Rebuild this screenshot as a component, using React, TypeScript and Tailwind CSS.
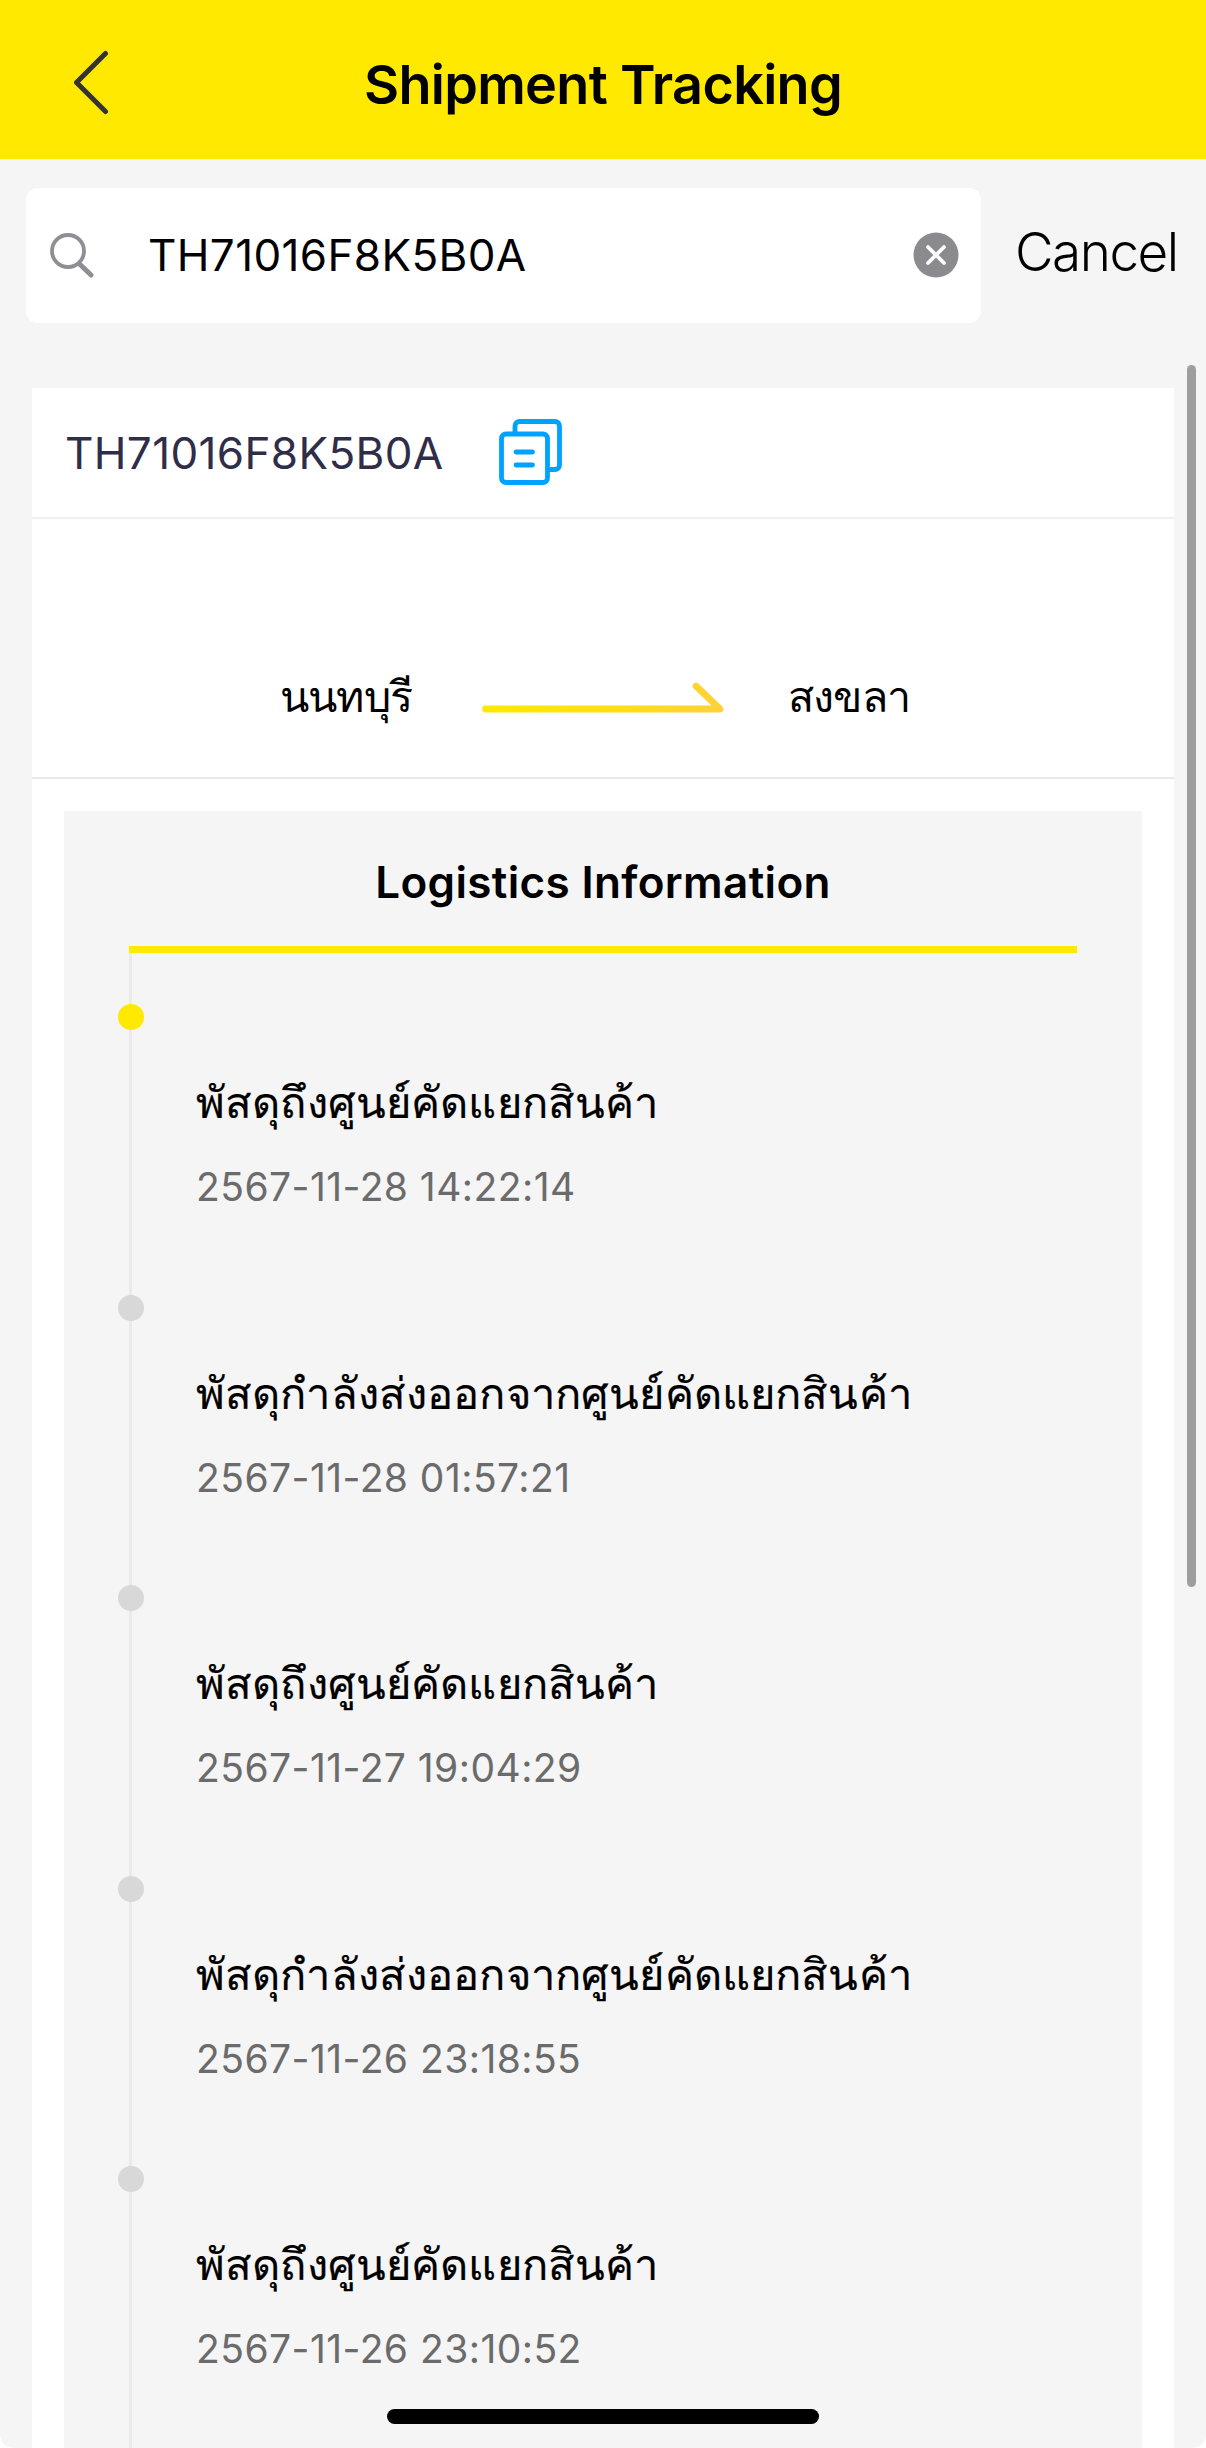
const events = [
  { text: 'พัสดุถึงศูนย์คัดแยกสินค้า', time: '2567-11-28 14:22:14' },
  { text: 'พัสดุกำลังส่งออกจากศูนย์คัดแยกสินค้า', time: '2567-11-28 01:57:21' },
  { text: 'พัสดุถึงศูนย์คัดแยกสินค้า', time: '2567-11-27 19:04:29' },
  { text: 'พัสดุกำลังส่งออกจากศูนย์คัดแยกสินค้า', time: '2567-11-26 23:18:55' },
  { text: 'พัสดุถึงศูนย์คัดแยกสินค้า', time: '2567-11-26 23:10:52' },
];

function Header() {
  return (
    <header className="relative flex h-[159px] shrink-0 items-center justify-center bg-[#ffe900] pt-[10px]">
      <svg className="absolute top-[50px] left-[73px]" width="36" height="65" viewBox="0 0 36 65" fill="none" stroke="#333" strokeWidth="5" strokeLinecap="round" strokeLinejoin="round">
        <path d="M32.500 3.500 L3.500 32.500 L32.500 61.500" />
      </svg>
      <h1 className="text-[54px] leading-[64px] font-semibold tracking-[-0.7px]">Shipment Tracking</h1>
    </header>
  );
}

function SearchBar() {
  return (
    <div className="flex h-[229px] shrink-0 items-start pt-[29px] pl-[26px]">
      <div className="flex h-[135px] w-[955px] items-center rounded-xl bg-white pr-[22px] pb-[2px] pl-[24px]">
        <svg width="45" height="46" viewBox="0 0 45 46" fill="none" stroke="#8e8e93" strokeLinecap="round">
          <circle cx="18" cy="19" r="16" strokeWidth="3.8" />
          <path d="M29.500 32 L41 43" strokeWidth="5" />
        </svg>
        <span className="ml-[53px] flex-1 pt-px text-[44px] leading-none tracking-[0.38px]">TH71016F8K5B0A</span>
        <svg width="46" height="46" viewBox="0 0 46 46">
          <circle cx="23" cy="23" r="22.5" fill="#8b8a8f" />
          <path d="M15 15 L31 31 M31 15 L15 31" stroke="#fff" strokeWidth="3.8" strokeLinecap="round" />
        </svg>
      </div>
      <span className="mt-[29px] ml-[34px] text-[53px] leading-[70px] font-light tracking-[-1.5px]">Cancel</span>
    </div>
  );
}

function CopyIcon() {
  return (
    <svg className="mb-[2px]" width="63" height="66" viewBox="0 0 63 66" fill="none" stroke="#00a2ff" strokeWidth="4.8" strokeLinecap="round" strokeLinejoin="round">
      <rect x="2.5" y="15" width="46" height="48.5" rx="4.5" />
      <path d="M16 14.5 V7 a4.5 4.5 0 0 1 4.5 -4.500 H56 a4.5 4.5 0 0 1 4.5 4.500 V46 a4.5 4.5 0 0 1 -4.500 4.500 H50" />
      <path d="M17 33 H33.5 M17 46 H33.5" />
    </svg>
  );
}

function RouteArrow() {
  return (
    <svg width="246" height="34" viewBox="0 0 246 34" fill="none">
      <defs>
        <linearGradient id="route" gradientUnits="userSpaceOnUse" x1="0" y1="0" x2="244" y2="0">
          <stop offset="0" stopColor="#ffe900" />
          <stop offset="0.55" stopColor="#ffdf10" />
          <stop offset="1" stopColor="#ffd03c" />
        </linearGradient>
      </defs>
      <path d="M5.500 29 H240 L216 6" stroke="url(#route)" strokeWidth="6.8" strokeLinecap="round" strokeLinejoin="round" />
    </svg>
  );
}

export default function App() {
  return (
    <div className="h-[2448px] w-[1206px] overflow-hidden bg-white font-['Inter',sans-serif] text-black">
      <div className="relative flex h-full flex-col overflow-hidden rounded-b-[14px] bg-[#f5f5f5]">
        <Header />
        <SearchBar />
        <main className="mx-8 flex flex-1 flex-col bg-white">
          <div className="flex h-[131px] shrink-0 items-center border-b-2 border-[#f0f0f0] pl-[33px]">
            <span className="w-[434px] text-[44px] leading-none tracking-[0.38px] text-[#302d49]">TH71016F8K5B0A</span>
            <CopyIcon />
          </div>
          <div className="flex h-[260px] shrink-0 items-end border-b-2 border-[#e9e9e9] pb-[51px] pl-[248px] text-[43px] leading-[60px] tracking-[-0.8px]">
            <span className="w-[200px]">นนทบุรี</span>
            <span className="mb-[12px] w-[308px]"><RouteArrow /></span>
            <span>สงขลา</span>
          </div>
          <section className="mx-8 mt-8 flex flex-1 flex-col bg-[#f5f5f5] px-[65px]">
            <h2 className="flex h-[142px] shrink-0 items-center justify-center border-b-[7px] border-[#ffe900] pt-[6px] text-[44px] leading-none font-semibold tracking-[0.35px]">Logistics Information</h2>
            <ol className="flex-1 border-l-[3px] border-[#eaeaea]">
              {events.map((event, i) => (
                <li key={event.time} className="relative h-[290.5px] pt-[124px] pl-[64px]">
                  <span className={`absolute top-[51px] -left-[14.5px] size-[26px] rounded-full ${i === 0 ? 'bg-[#ffe900]' : 'bg-[#d8d8d8]'}`} />
                  <p className="h-[50px] text-[43.500px] leading-[50px] tracking-[0.15px] whitespace-nowrap [-webkit-text-stroke:0.2px_black]">{event.text}</p>
                  <p className="mt-[35px] text-[39px] leading-[50px] tracking-[0.45px] whitespace-nowrap text-[#6b6b6b]">{event.time}</p>
                </li>
              ))}
            </ol>
          </section>
        </main>
        <div className="absolute top-[365px] right-[10px] h-[1222px] w-[9px] rounded-full bg-[#9e9e9e]" />
        <div className="absolute bottom-[24px] left-1/2 h-[15px] w-[432px] -translate-x-1/2 rounded-full bg-black" />
      </div>
    </div>
  );
}
